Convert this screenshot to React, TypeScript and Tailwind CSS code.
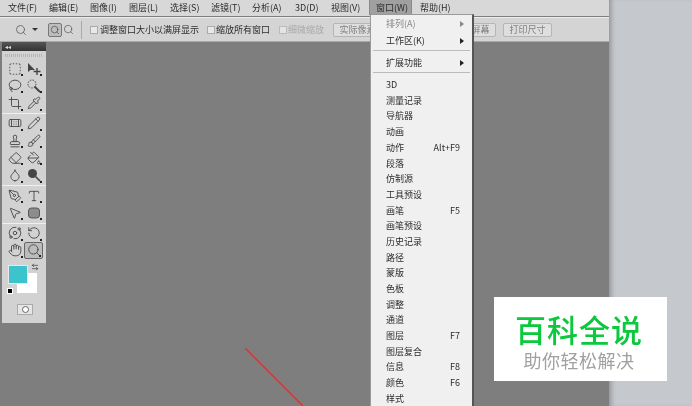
import { Search, Hand, Type, MousePointer2, Crop, Pipette, Brush, Pencil, Stamp, Eraser, PaintBucket, Droplet, PenTool, Lasso, Bandage, Orbit, RotateCcw, ArrowLeftRight, SquareDashed } from "lucide-react";
import type { ComponentType } from "react";

const font = "font-['Noto_Sans_CJK_SC','Liberation_Sans',sans-serif]";

const menus = ["文件(F)", "编辑(E)", "图像(I)", "图层(L)", "选择(S)", "滤镜(T)", "分析(A)", "3D(D)", "视图(V)"];
const widths = ["w-[41px]", "w-[41px]", "w-[39px]", "w-[41px]", "w-[41px]", "w-[41px]", "w-[43px]", "w-[36px]", "w-[38px]"];

const items: [string, string][] = [
  ["3D", ""], ["测量记录", ""], ["导航器", ""], ["动画", ""], ["动作", "Alt+F9"], ["段落", ""], ["仿制源", ""],
  ["工具预设", ""], ["画笔", "F5"], ["画笔预设", ""], ["历史记录", ""], ["路径", ""], ["蒙版", ""], ["色板", ""],
  ["调整", ""], ["通道", ""], ["图层", "F7"], ["图层复合", ""], ["信息", "F8"], ["颜色", "F6"], ["样式", ""],
];

type IconProps = { size?: number; strokeWidth?: number; className?: string };

const MoveTool = ({ className }: IconProps) => (
  <svg width="14" height="14" viewBox="0 0 14 14" className={className}>
    <path d="M1 1 L1 10 L3.5 8 L8 8 Z" fill="currentColor" />
    <path d="M10 6 V13 M6.5 9.5 H13.5" stroke="currentColor" strokeWidth="1.4" />
  </svg>
);

const WandTool = ({ className }: IconProps) => (
  <svg width="15" height="15" viewBox="0 0 15 15" className={className}>
    <circle cx="6" cy="6" r="4" fill="none" stroke="currentColor" strokeWidth="1" strokeDasharray="1.5 1.2" />
    <path d="M8.5 8.5 L14 14" stroke="currentColor" strokeWidth="2" />
  </svg>
);

const SpongeTool = ({ className }: IconProps) => (
  <svg width="14" height="14" viewBox="0 0 14 14" className={className}>
    <circle cx="5.5" cy="5.5" r="4.5" fill="currentColor" />
    <path d="M8.5 8.5 L13 13" stroke="currentColor" strokeWidth="1.6" />
  </svg>
);

const ShapeTool = ({ className }: IconProps) => (
  <svg width="14" height="14" viewBox="0 0 14 14" className={className}>
    <rect x="1.5" y="2" width="11" height="10" rx="3" fill="#8c8c8c" stroke="#555" />
  </svg>
);

const toolGroups: ComponentType<IconProps>[][][] = [
  [[SquareDashed, MoveTool], [Lasso, WandTool], [Crop, Pipette]],
  [[Bandage, Pencil], [Stamp, Brush], [Eraser, PaintBucket], [Droplet, SpongeTool]],
  [[PenTool, Type], [MousePointer2, ShapeTool]],
  [[Orbit, RotateCcw], [Hand, Search]],
];

const SubArrow = ({ dim }: { dim?: boolean }) => (
  <span className={`border-y-[3px] border-l-[4px] border-y-transparent ${dim ? "border-l-[#888]" : "border-l-[#222]"}`} />
);

const OptionButton = ({ label, className }: { label?: string; className: string }) => (
  <span className={`h-[14px] w-[49px] shrink-0 border border-[#b5b5b5] rounded-[2px] bg-[#dedede] text-[#808080] flex items-center justify-center whitespace-nowrap ${className}`}>{label}</span>
);

const App = () => {
  return (
    <div className={`relative w-[692px] h-[406px] overflow-hidden flex bg-[#7e7e7e] text-[9px] text-[#2c2c2c] blur-[0.35px] ${font}`}>
      <div className="w-[609px] h-full flex flex-col shrink-0">
        {/* Menu bar */}
        <div className="h-[16px] bg-[#d8d8d8] flex items-start pl-[8px]">
          {menus.map((m, i) => (
            <span key={m} className={`${widths[i]} shrink-0 h-[15px] pt-[2px] leading-[12px]`}>{m}</span>
          ))}
          <span className="w-[43px] shrink-0 h-[15px] pt-[2px] pl-[6px] leading-[12px] bg-[#a0a0a0] border-x border-[#8a8a8a] whitespace-nowrap">窗口(W)</span>
          <span className="ml-[8px] shrink-0 h-[15px] pt-[2px] leading-[12px]">帮助(H)</span>
        </div>

        {/* Options bar */}
        <div className="h-[25px] mt-[1px] bg-[#d4d4d4] border-t border-[#ececec] border-b-[1px] border-b-[#a8a8a8] flex items-center pl-[15px]">
          <Search size={12} strokeWidth={1.5} className="text-[#555]" />
          <span className="ml-[5px] border-x-[3px] border-t-[3px] border-x-transparent border-t-[#333]" />
          <div className="ml-[10px] w-[14px] h-[14px] border border-[#777] rounded-[2px] bg-[#bdbdbd] flex items-center justify-center">
            <Search size={10} strokeWidth={1.5} className="text-[#444]" />
          </div>
          <Search size={11} strokeWidth={1.5} className="ml-[1px] text-[#555]" />
          <span className="ml-[7px] w-px h-[18px] bg-[#aaa]" />
          <span className="ml-[8px] w-[8px] h-[8px] border border-[#aaa] bg-[#e8e8e8]" />
          <span className="ml-[2px] whitespace-nowrap">调整窗口大小以满屏显示</span>
          <span className="ml-[8px] w-[8px] h-[8px] border border-[#aaa] bg-[#e8e8e8]" />
          <span className="ml-[1px] whitespace-nowrap">缩放所有窗口</span>
          <span className="ml-[9px] w-[8px] h-[8px] border border-[#bbb] bg-[#e4e4e4]" />
          <span className="ml-[1px] whitespace-nowrap text-[#aaa]">细微缩放</span>
          <OptionButton label="实际像素" className="ml-[9px]" />
          <OptionButton className="ml-[8px]" />
          <OptionButton label="填充屏幕" className="ml-[8px]" />
          <OptionButton label="打印尺寸" className="ml-[7px]" />
        </div>

        {/* Workspace */}
        <div className="flex-1 flex items-start pl-[2px]">
          <div className="w-[44px] h-[281px] bg-[#d2d2d2] flex flex-col">
            <div className="h-[9px] bg-gradient-to-b from-[#555] to-[#333] flex items-center pl-[3px] text-[6px] leading-none text-[#ddd]">◂◂</div>
            <div className="mx-[3px] mt-[3px] h-[3px] bg-[repeating-linear-gradient(90deg,#b5b5b5_0,#b5b5b5_1px,#d2d2d2_1px,#d2d2d2_2px)]" />
            <div className="flex flex-col mt-[3px]">
              {toolGroups.map((group, g) => (
                <div key={g} className={`flex flex-col pb-[1px] ${g ? "border-t border-t-[#f0f0f0] pt-[1px]" : ""}`}>
                  {group.map((row, r) => (
                    <div key={r} className="h-[17.3px] flex pl-[3px]">
                      {row.map((Icon, c) => {
                        const active = g === 3 && r === 1 && c === 1;
                        return (
                          <div key={c} className={`relative w-[19px] h-[17px] flex items-center justify-center ${active ? "border border-[#666] rounded-[2px] bg-[#bcbcbc]" : ""}`}>
                            <Icon size={14} strokeWidth={1.5} className="text-[#444]" />
                            <span className="absolute right-[1px] bottom-[1px] w-[2px] h-[2px] bg-[#222]" />
                          </div>
                        );
                      })}
                    </div>
                  ))}
                </div>
              ))}
            </div>
            {/* Colour swatches */}
            <div className="relative h-[32px] mt-[5px]">
              <span className="absolute left-[15px] top-[8px] w-[20px] h-[20px] bg-white" />
              <span className="absolute left-[6px] top-0 w-[20px] h-[19px] bg-[#3cc4cc] border border-[#e8e8e8]" />
              <ArrowLeftRight size={8} strokeWidth={2} className="absolute left-[29px] top-[-2px] text-[#333]" />
              <span className="absolute left-[5px] top-[23px] w-[6px] h-[6px] bg-black border border-white" />
            </div>
            <div className="mt-[7px] ml-[15px] w-[16px] h-[11px] border border-[#aaa] bg-[#e6e6e6] flex items-center justify-center">
              <span className="w-[7px] h-[7px] rounded-full border border-[#666] bg-white" />
            </div>
          </div>
        </div>
      </div>

      {/* Right side panel area */}
      <div className="flex-1 h-full bg-[#c5c8cd] shadow-[inset_5px_0_5px_-3px_#8f9196]" />

      {/* Diagonal guide in the document */}
      <svg className="absolute left-[245px] top-[348px]" width="58" height="58" viewBox="0 0 58 58">
        <line x1="0" y1="0" x2="58" y2="58" stroke="#ee2a2a" strokeWidth="1.4" />
      </svg>

      {/* Window menu */}
      <div className="absolute left-[370px] top-[14px] w-[104px] h-[400px] bg-[#f0f0f0] border border-[#9a9a9a] border-r-2 border-r-[#555]">
        <div className="h-[16px] mt-[1px] pl-[15px] pr-[8px] flex items-center justify-between text-[#888]"><span>排列(A)</span><SubArrow dim /></div>
        <div className="h-[16px] mt-[1px] pl-[15px] pr-[8px] flex items-center justify-between"><span>工作区(K)</span><SubArrow /></div>
        <div className="h-px mx-[2px] mt-[1px] bg-[#bbb]" />
        <div className="h-[16px] mt-[4px] pl-[15px] pr-[8px] flex items-center justify-between"><span>扩展功能</span><SubArrow /></div>
        <div className="h-px mx-[2px] mt-[1px] mb-[4px] bg-[#bbb]" />
        {items.map(([label, key]) => (
          <div key={label} className="h-[15.7px] pl-[15px] pr-[12px] flex items-center justify-between">
            <span>{label}</span>
            {key && <span>{key}</span>}
          </div>
        ))}
      </div>

      {/* Watermark */}
      <div className="absolute left-[494px] top-[297px] w-[173px] h-[84px] bg-white flex flex-col items-center pt-[14px] pr-[3px]">
        <span className="text-[31px] leading-[36px] font-medium tracking-[1px] text-[#0cc83c]">百科全说</span>
        <span className="mt-[2px] text-[18px] leading-[22px] tracking-[0.5px] text-[#a0a0a0]">助你轻松解决</span>
      </div>
    </div>
  );
};

export default App;
